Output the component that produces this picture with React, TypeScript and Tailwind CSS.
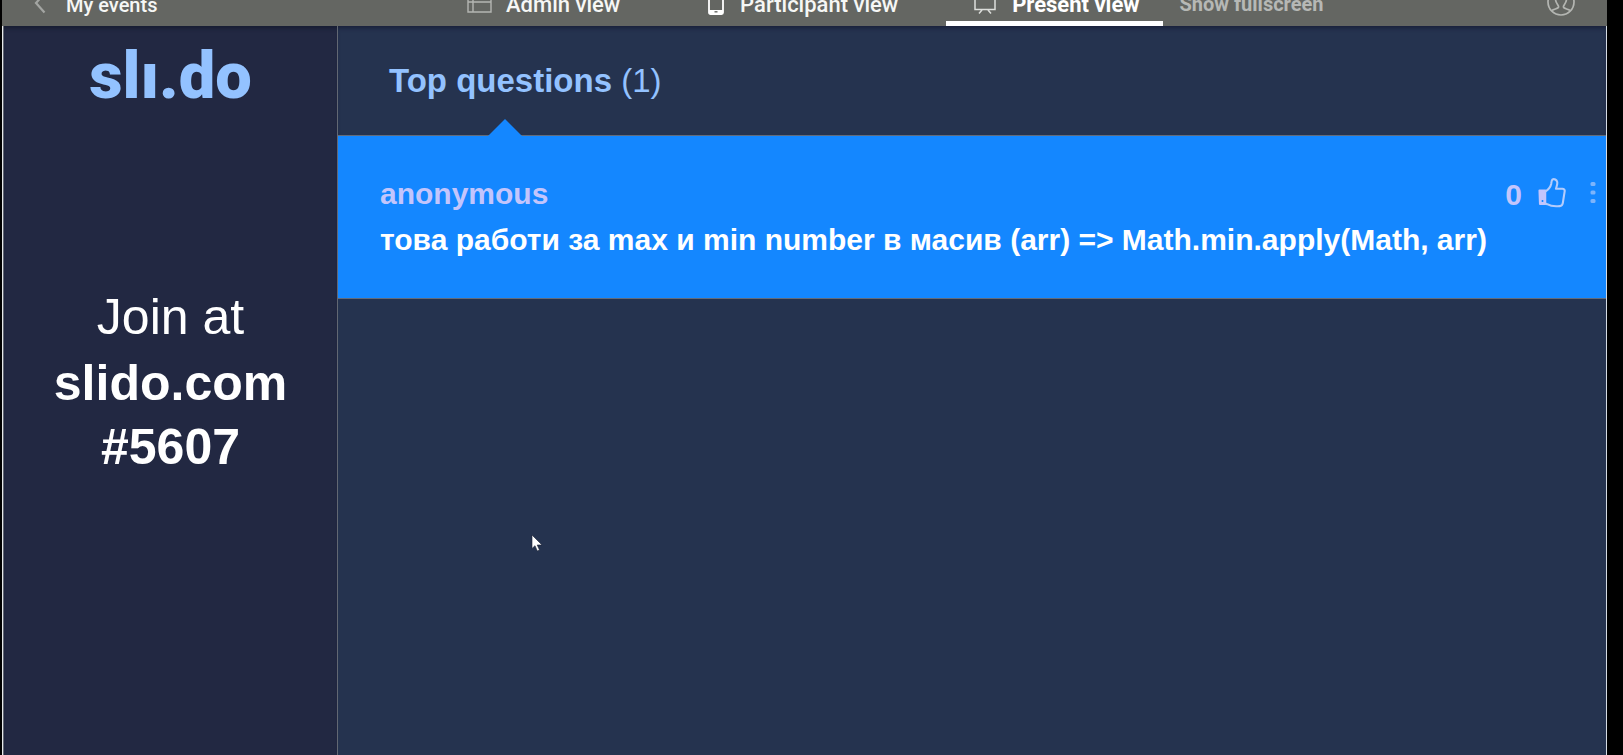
import React from "react";

function ChevronIcon() {
  return (
    <svg width="12" height="24" viewBox="0 0 12 24" fill="none" stroke="#a3a5a2" strokeWidth="2.2" aria-hidden="true">
      <path d="M10.5 2.500 2 12l8.500 9.500" />
    </svg>
  );
}

function AdminIcon() {
  return (
    <svg width="25" height="20" viewBox="0 0 25 20" fill="none" stroke="#b4b6b2" strokeWidth="1.4" aria-hidden="true">
      <path d="M1 1h23v16H1zM6 1v16M1 7h23" />
    </svg>
  );
}

function PhoneIcon() {
  return (
    <svg width="16" height="26" viewBox="0 0 16 26" aria-hidden="true">
      <rect x="1" y="1" width="14" height="24" rx="1.5" fill="none" stroke="#fff" strokeWidth="1.8" />
      <path d="M1 21h14v3.5H1z" fill="#fff" />
      <path d="M6.500 22.800h3" stroke="#646662" strokeWidth="1.4" />
    </svg>
  );
}

function ScreenIcon() {
  return (
    <svg width="22" height="24" viewBox="0 0 22 24" fill="none" stroke="#dcdedb" strokeWidth="1.5" aria-hidden="true">
      <path d="M1 1v17.500h20V1zM8 19l-3 3.500M14 19l3 3.500" />
    </svg>
  );
}

function UserIcon() {
  return (
    <svg width="28" height="28" viewBox="0 0 28 28" fill="none" stroke="#b4b6b2" strokeWidth="1.7" aria-hidden="true">
      <circle cx="14" cy="14" r="13" />
      <path d="M5 22.500c2-1.700 6.300-1.600 6.600-3.500.2-2-3.100-3.500-3.100-8C8.500 7 11 5 14 5s5.500 2 5.500 6c0 4.500-3.300 6-3.100 8 .3 1.900 4.600 1.800 6.600 3.500" />
    </svg>
  );
}

function ThumbIcon() {
  return (
    <svg width="28" height="30" viewBox="0 0 28 30" fill="none" stroke="#b4ccfc" strokeWidth="2.1" strokeLinejoin="round" aria-hidden="true">
      <path d="M1.500 12.500h5.700V26H2z" fill="#c3c5fc" stroke="#c3c5fc" />
      <path d="M7.200 13.500c3-1.800 5.300-4.500 6-7.500.3-1.500.2-3.800 1.300-4.500 1.700-.9 4.200.2 4.700 2.500.5 2.400-.8 4.500-1.200 6.800h6.500c1.400 0 2.400 1.100 2.200 2.400l-1.900 12c-.3 1.700-1.400 2.800-3 2.900-4.500.5-9 .2-12.600-1.900l-2-.7" />
      <path d="M4.500 22v2" stroke="#1487ff" strokeWidth="1.6" />
    </svg>
  );
}

function DotsIcon() {
  return (
    <svg width="6" height="24" viewBox="0 0 6 24" fill="#7db4fb" aria-hidden="true">
      <rect x="0.500" y="1" width="5" height="4" rx="1.500" />
      <rect x="0.500" y="9.500" width="5" height="4" rx="1.500" />
      <rect x="0.500" y="18" width="5" height="4" rx="1.500" />
    </svg>
  );
}

function TopBar() {
  return (
    <header className="relative z-10 flex h-[26px] items-end overflow-hidden bg-[#646662] font-[Roboto,sans-serif] text-xl leading-5 font-medium text-[#f6f7f5]">
      <a href="#events" className="flex h-10 w-[437px] shrink-0 items-end pb-[11px] pl-8">
        <span className="flex h-6 w-8 items-end"><ChevronIcon /></span>
        My events
      </a>
      <nav className="flex items-end text-[22px]">
        <a href="#admin" className="mr-8 flex items-end gap-3.5 px-7 pb-[11px]">
          <AdminIcon />
          <span>Admin view</span>
        </a>
        <a href="#participant" className="mr-5 flex items-end gap-4 px-7 pb-[11px]">
          <PhoneIcon />
          <span>Participant view</span>
        </a>
        <a href="#present" aria-current="page" className="flex items-end gap-4 border-b-5 border-white pr-6 pl-7 pb-[6px] font-bold text-white">
          <ScreenIcon />
          <span>Present view</span>
        </a>
      </nav>
      <button type="button" className="ml-4 pb-3 font-bold text-[#b6b8b5]">Show fullscreen</button>
      <button type="button" aria-label="Account" className="mr-8 ml-auto pb-[10px]">
        <UserIcon />
      </button>
    </header>
  );
}

function Sidebar() {
  return (
    <aside className="w-[335px] shrink-0 border-x border-x-[#626873] text-center">
      <a href="#home" className="mt-4 block font-[Roboto,sans-serif] text-[65px] leading-[68px] font-black text-[#93c2ff]">
        slı.do
      </a>
      <div className="mt-[175px] text-[50px] leading-16 text-white">
        <p className="mb-0.5">Join at</p>
        <p className="font-bold">slido.com</p>
        <p className="font-bold">#5607</p>
      </div>
    </aside>
  );
}

function Question() {
  return (
    <article className="flex h-[163px] items-start justify-between border-b border-[#626c7c] bg-[#1487ff] pt-[35px] pl-[42px] text-[30px] font-bold">
      <div className="leading-[46px] whitespace-nowrap">
        <h2 className="text-[#c3c5fc]">anonymous</h2>
        <p className="text-white">това работи за max и min number в масив (arr) =&gt; Math.min.apply(Math, arr)</p>
      </div>
      <div className="flex items-start pt-0.5 pr-2.5 leading-9 text-[#c3c5fc]">
        <button type="button" aria-label="Upvote" className="mr-6 flex items-center gap-4">
          <span className="pt-1">0</span>
          <ThumbIcon />
        </button>
        <button type="button" aria-label="More options" className="pt-2"><DotsIcon /></button>
      </div>
    </article>
  );
}

export default function App() {
  return (
    <div className="flex min-h-screen flex-col bg-black pr-4 pl-0.5 font-['Liberation_Sans',Arial,sans-serif]">
      <TopBar />
      <div className="flex flex-1 border-x border-l-[#e6e8ea] border-r-[#d5dbe3] bg-[#25334f]">
        <div className="flex bg-[#222842] shadow-[inset_0_4px_4px_-2px_#161b30]">
          <Sidebar />
        </div>
        <main className="relative min-w-0 flex-1">
          <div className="relative flex h-[110px] items-center border-b border-[#626c7c] pl-[51px] shadow-[inset_0_4px_4px_-2px_#191f38]">
            <h1 className="text-[33px] leading-10 text-[#93c2ff]">
              <span className="font-bold">Top questions</span> (1)
            </h1>
            <svg className="absolute -bottom-px left-[150px]" width="34" height="17" viewBox="0 0 34 17" aria-hidden="true">
              <path d="M0 17 17 0l17 17z" fill="#1487ff" />
            </svg>
          </div>
          <Question />
          <svg className="absolute top-[508px] left-[193px]" width="12" height="19" viewBox="0 0 12 19" aria-hidden="true">
            <path d="M1 1v13.500l3-2.800 2.300 5.300 2.200-1-2.300-5H11z" fill="#fff" stroke="#1c2436" strokeWidth="0.600" />
          </svg>
        </main>
      </div>
    </div>
  );
}
